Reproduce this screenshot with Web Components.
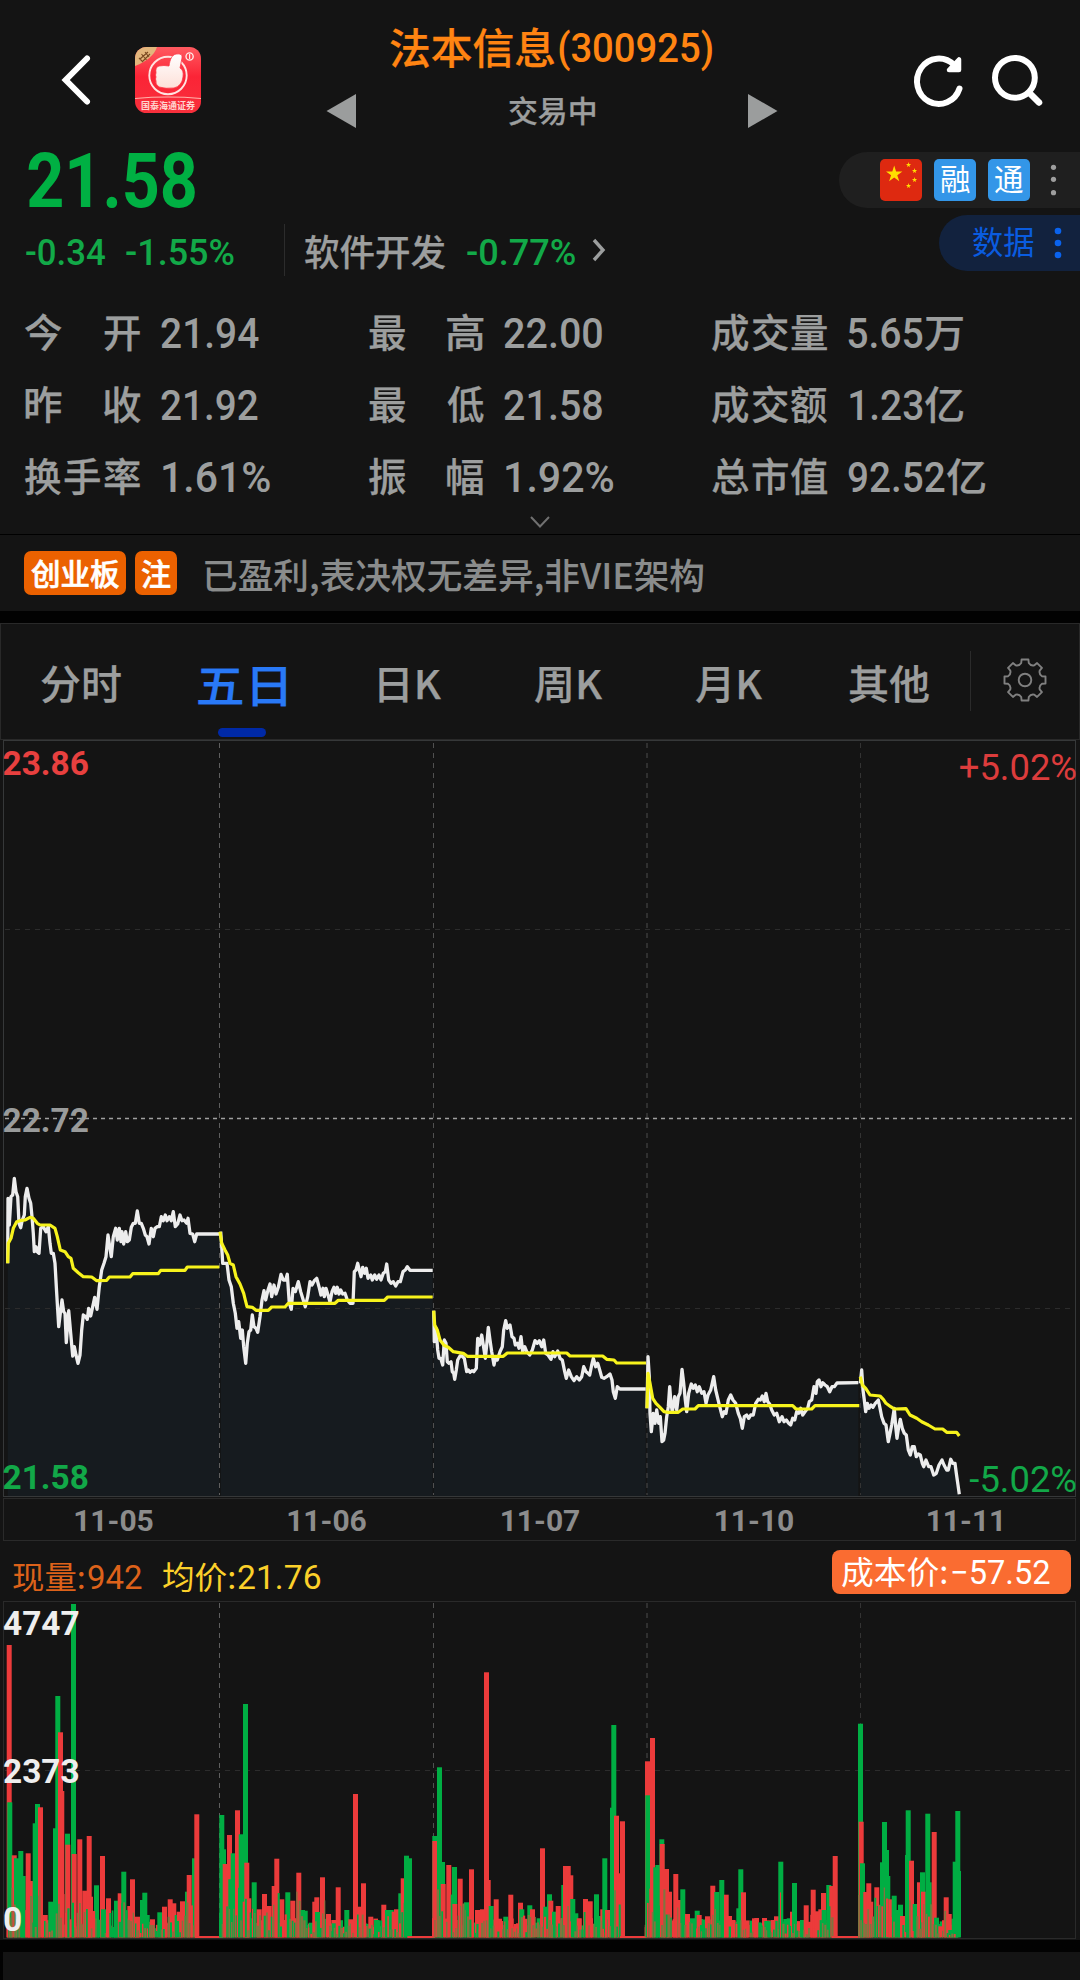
<!DOCTYPE html>
<html lang="zh-CN">
<head>
<meta charset="utf-8">
<title>法本信息(300925)</title>
<style>
  html, body {
    margin: 0;
    background: #000;
  }
  body {
    width: 1080px;
    height: 1980px;
    overflow: hidden;
    color: #9c9e9e;
    font-family: Roboto, "Noto Sans CJK SC", sans-serif;
  }
</style>
</head>
<body>
<stock-page></stock-page>

<template id="page_tpl">
  <style>
    :host {
      display: flex;
      flex-direction: column;
      width: 1080px;
      height: 1980px;
      background: #141414;
    }
    .band { height: 12px; background: #020202; flex: none; }
    .rest { flex: 1; margin-left: 3px; background: #141414; }
    .tail { flex: 1; display: flex; background: #020202; }
  </style>
  <stock-header></stock-header>
  <quote-summary></quote-summary>
  <quote-stats></quote-stats>
  <stock-notice></stock-notice>
  <div class="band"></div>
  <period-tabs></period-tabs>
  <price-chart></price-chart>
  <volume-info></volume-info>
  <volume-chart></volume-chart>
  <div class="band"></div>
  <div class="tail"><div class="rest"></div></div>
</template>

<template id="header_tpl">
  <style>
    :host {
      display: grid;
      grid-template-columns: 326px 452px 1fr;
      height: 140px;
      flex: none;
    }
    .left { display: flex; align-items: flex-start; padding: 47px 0 0 60px; gap: 40px; }
    .mid { padding-top: 22px; }
    .title { display: flex; align-items: center; height: 52px; padding-left: 64px; color: #ff8412; gap: 5px; }
    .title .name { font-size: 42px; }
    .title .code { font-size: 41px; }
    .sub { display: flex; align-items: center; justify-content: space-between; height: 40px; margin-top: 17px; }
    .sub fit-text { font-size: 29.5px; margin-top: .15em; }
    .right { padding: 50px 0 0 130px; }
    svg { display: block; }
  </style>
  <div class="left">
    <svg width="35" height="66" viewBox="60 47 35 66"><path d="M87 58.500L65.700 80l21.300 21.500" fill="none" stroke="#fff" stroke-width="6" stroke-linecap="round"/></svg>
    <svg width="66" height="66" viewBox="0 0 66 66">
      <defs>
        <clipPath id="c"><rect width="66" height="66" rx="11.500"/></clipPath>
        <linearGradient id="g" x1="0" y1="0" x2="0" y2="1"><stop offset="0" stop-color="#ff5a60"/><stop offset=".45" stop-color="#fb2436"/><stop offset="1" stop-color="#f8303c"/></linearGradient>
        <linearGradient id="h" x1="0" y1="0" x2="0" y2="1"><stop offset="0" stop-color="#fff"/><stop offset="1" stop-color="#fde0d8"/></linearGradient>
      </defs>
      <g clip-path="url(#c)">
        <rect width="66" height="66" fill="url(#g)"/>
        <path d="M0 0H22Q18 12 0 19z" fill="#e3b67c"/>
        <path d="M4 11l4 4M6.500 7l5 6M10 5l4 5M5 12l8-7M8 14l7-7" stroke="#7a4a22" stroke-width="1.100"/>
        <circle cx="33" cy="28.500" r="18.700" fill="none" stroke="#ffe3e0" stroke-width="1.900"/>
        <path d="M34 19c1-7 3-11 7-12q7-1 6 4l-2 10q4 2 3 9-1 9-9 11-8 1-15-1-4-3-3-6-1-2 0-4-1-2 0-4-1-6 3-7 5-1 10 0z" fill="url(#h)" stroke="#fb3644" stroke-width=".8"/>
        <circle cx="54.600" cy="9.500" r="3.600" fill="none" stroke="#ffe9e6" stroke-width="1.400"/><path d="M54.600 7v5" stroke="#ffe9e6" stroke-width="1.200"/>
        <path d="M0 51.500Q33 48.500 66 51.500" fill="none" stroke="#ffb4ac" stroke-width="1.200"/>
        <text x="33" y="62" text-anchor="middle" font-size="9" font-weight="700" fill="#ffd5d0" font-family="Noto Sans CJK SC" textLength="54">国泰海通证券</text>
      </g>
    </svg>
  </div>
  <div class="mid">
    <div class="title">
      <fit-text class="name" cjk w="164">法本信息</fit-text>
      <fit-text class="code" w="153">(300925)</fit-text>
    </div>
    <div class="sub">
      <svg width="30" height="34"><path d="M30 0V34L.500 17z" fill="#9b9d9d"/></svg>
      <fit-text cjk w="86">交易中</fit-text>
      <svg width="30" height="34"><path d="M0 0V34L29.500 17z" fill="#9b9d9d"/></svg>
    </div>
  </div>
  <div class="right">
    <svg width="145" height="62" viewBox="908 50 145 62" fill="none" stroke="#fff" stroke-width="6" stroke-linecap="round">
      <path d="M959.500 88.500A21.800 22.700 0 1 1 954 65"/>
      <path d="M959 59.500v10.500h-10z" fill="#fff" stroke-width="4.500" stroke-linejoin="round"/>
      <circle cx="1014.900" cy="77.800" r="19.900"/>
      <path d="M1029.500 93l9.500 9.500" stroke-width="6.500"/>
    </svg>
  </div>
</template>

<template id="summary_tpl">
  <style>
    :host { display: flex; justify-content: space-between; height: 157px; flex: none; }
    .price { display: flex; align-items: center; height: 80px; padding-left: 27.5px; font-size: 76.4px; color: #00b043; }
    .price fit-text { font-weight: 700; }
    .change { display: flex; align-items: center; height: 64px; padding-left: 26px; font-size: 36.6px; color: #12a948; }
    .change fit-text { margin-top: .07em; }
    .change .pct { margin-left: 21px; }
    .line { width: 1px; height: 52px; margin: -4px 20px 0 50px; background: #2c2c2c; }
    .change .sector { color: #9c9e9e; font-size: 36px; margin-top: .11em; }
    .sector + fit-text { margin-left: 22px; }
    .change svg { margin-left: 15px; margin-top: -4px; }
    .right { display: flex; flex-direction: column; align-items: flex-end; gap: 7px; padding-top: 12px; }
    .pill { display: flex; align-items: center; height: 56px; box-sizing: border-box; border-radius: 29px 0 0 29px; }
    .badges { width: 241px; padding-left: 41px; gap: 12px; background: #1f1f1f; }
    .tag { display: flex; align-items: center; justify-content: center; width: 42px; height: 42px; border-radius: 5px; background: #3396e8; color: #fff; font-size: 30px; }
    .tag fit-text { font-weight: 400; margin-top: 0; }
    .data { width: 141px; padding-left: 34px; background: #12223e; color: #0a5ce0; font-size: 31.5px; }
    .data fit-text { font-weight: 400; }
    svg { display: block; flex: none; }
  </style>
  <div>
    <div class="price"><fit-text w="167.5">21.58</fit-text></div>
    <div class="change">
      <fit-text w="79">-0.34</fit-text>
      <fit-text class="pct" w="108">-1.55%</fit-text>
      <div class="line"></div>
      <fit-text class="sector" cjk w="140">软件开发</fit-text>
      <fit-text w="108.5">-0.77%</fit-text>
      <svg width="16" height="24"><path d="M3 2l9 10-9 10" fill="none" stroke="#9c9e9e" stroke-width="3.400"/></svg>
    </div>
  </div>
  <div class="right">
    <div class="pill badges">
      <svg width="42" height="42">
        <rect width="42" height="42" rx="5" fill="#de2910"/>
        <g fill="#ffde00">
          <path id="s" d="M14.200 6.500l1.900 6h6.300l-5.100 3.700 2 6-5.100-3.700-5.100 3.700 2-6-5.100-3.700h6.300z"/>
          <use href="#s" transform="translate(24 1) scale(.32)"/>
          <use href="#s" transform="translate(30 7) scale(.32)"/>
          <use href="#s" transform="translate(30 16) scale(.32)"/>
          <use href="#s" transform="translate(24 22) scale(.32)"/>
        </g>
      </svg>
      <div class="tag"><fit-text cjk w="28.5">融</fit-text></div>
      <div class="tag"><fit-text cjk w="28.5">通</fit-text></div>
      <svg width="22" height="56" fill="#9e9e9e"><circle cx="11.500" cy="15.300" r="2.600"/><circle cx="11.500" cy="27.300" r="2.600"/><circle cx="11.500" cy="40.700" r="2.600"/></svg>
    </div>
    <div class="pill data">
      <fit-text cjk w="61">数据</fit-text>
      <svg width="40" height="56" fill="#0a63ee"><circle cx="24" cy="16" r="3.300"/><circle cx="24" cy="28" r="3.300"/><circle cx="24" cy="40" r="3.300"/></svg>
    </div>
  </div>
</template>

<template id="stats_tpl">
  <style>
    :host { display: block; height: 237px; flex: none; border-bottom: 1px solid #000; }
    .grid { display: grid; grid-template: repeat(3, 72px) / repeat(3, 343.7px); padding-left: 25px; }
    .cell { display: flex; align-items: center; font-size: 42px; }
    .label { display: flex; justify-content: space-between; width: 115px; margin-right: 20.5px; font-size: 39px; }
    .unit { font-size: 39px; margin-left: 2.5px; }
    .first1 { margin-left: 2px; }
    svg { display: block; margin: 2px auto 0; }
  </style>
  <div class="grid"></div>
  <svg width="22" height="14"><path d="M2 2l9 9.500 9-9.500" fill="none" stroke="#707070" stroke-width="2"/></svg>
</template>

<template id="notice_tpl">
  <style>
    :host { display: flex; align-items: center; height: 76px; padding-left: 24px; flex: none; }
    .tag { display: flex; align-items: center; justify-content: center; height: 44px; width: 42px; border-radius: 7px; background: #eb6100; color: #fff; font-size: 29.5px; margin-right: 9px; padding-top: 3px; box-sizing: border-box; }
    .wide { width: 102px; }
    .tag fit-text { -webkit-text-stroke-width: .6px; }
    .msg { margin-left: 18.5px; margin-top: .04em; font-size: 35.5px; color: #8a8c8c; font-family: "Noto Sans CJK SC"; -webkit-text-stroke-width: .1px; }
  </style>
  <div class="tag wide"><fit-text cjk w="88">创业板</fit-text></div>
  <div class="tag"><fit-text cjk w="28.5">注</fit-text></div>
  <fit-text class="msg" cjk w="498.5">已盈利,表决权无差异,非VIE架构</fit-text>
</template>

<template id="tabs_tpl">
  <style>
    :host { display: flex; box-sizing: border-box; height: 117px; border: 1px solid #292929; flex: none; font-family: "Noto Sans CJK SC"; font-size: 40px; }
    .tabs { display: flex; justify-content: space-between; box-sizing: border-box; width: 969px; padding: 35px 41px 0 40px; }
    .tab { display: flex; flex-direction: column; align-items: center; }
    .first { margin-right: -17px; }
    .last { margin-left: -7px; }
    .on { color: #2979f7; font-size: 45px; margin-top: -1px; }
    .bar { width: 48px; height: 9px; margin-top: 21.5px; border-radius: 5px; background: #0029a6; }
    .set { flex: 1; display: flex; align-items: center; border-left: 1px solid #2b2b2b; height: 60px; margin-top: 27px; }
    svg { display: block; margin: -2px 0 0 31px; }
  </style>
  <div class="tabs">
    <div class="tab first"><fit-text cjk w="80">分时</fit-text></div>
    <div class="tab on"><fit-text cjk w="88">五日</fit-text><div class="bar"></div></div>
    <div class="tab"><fit-text cjk w="62.5">日K</fit-text></div>
    <div class="tab"><fit-text cjk w="67.5">周K</fit-text></div>
    <div class="tab"><fit-text cjk w="66.5">月K</fit-text></div>
    <div class="tab last"><fit-text cjk w="80">其他</fit-text></div>
  </div>
  <div class="set"><svg width="46" height="46" viewBox="-23 -23 46 46" fill="none" stroke="#808080" stroke-width="1.900" stroke-linejoin="round"><circle r="6.300"/><path class="gear"/></svg></div>
</template>

<template id="info_tpl">
  <style>
    :host { display: flex; height: 60px; flex: none; font-size: 33px; }
    fit-text { font-weight: 400; margin-top: 0; }
    .now, .avg { display: flex; align-items: center; height: 73px; }
    .now { margin-left: 13px; color: #dd621a; gap: 4px; }
    .avg { margin-left: 21px; color: #fbd02a; gap: 3px; }
    .k { margin-top: -.1em; font-size: 31.5px; font-family: "Noto Sans CJK SC"; }
    .cost { display: flex; align-items: center; box-sizing: border-box; width: 239px; height: 44px; margin: 9px 9px 0 auto; padding-left: 10px; gap: 5px; border-radius: 8px; background: #fa6c31; color: #fff; }
    .cost .k { font-size: 32px; }
  </style>
  <div class="now"><fit-text class="k" cjk w="71">现量:</fit-text><fit-text w="54">942</fit-text></div>
  <div class="avg"><fit-text class="k" cjk w="71.5">均价:</fit-text><fit-text w="82">21.76</fit-text></div>
  <div class="cost"><fit-text class="k" cjk w="104.5">成本价:</fit-text><fit-text w="98">−57.52</fit-text></div>
</template>

<script>
const tpl = id => document.querySelector('#' + id).content.cloneNode(true);

// Condensed text: its ink is stretched or squeezed to the width given in "w".
const ruler = document.createElement('canvas').getContext('2d');
class FitText extends HTMLElement {
  connectedCallback() {
    if (this.shadowRoot) return;
    this.attachShadow({mode: 'open'}).innerHTML = `
      <style>
        :host { display: block; flex: none; margin-top: .04em; white-space: nowrap; line-height: 1; font-weight: 500; }
        :host([cjk]) { margin-top: .076em; }
        span { display: inline-block; transform-origin: 0 50%; }
      </style><span><slot></slot></span>`;
    const cs = getComputedStyle(this);
    // the CJK family has no medium weight, so thicken the regular one a little
    if (this.hasAttribute('cjk') && cs.fontWeight === '500' && parseFloat(cs.webkitTextStrokeWidth) === 0) {
      this.style.webkitTextStrokeWidth = '.25px';
    }
    ruler.font = `${cs.fontWeight} ${cs.fontSize} ${cs.fontFamily}`;
    const m = ruler.measureText(this.textContent);
    const w = +this.getAttribute('w');
    const k = w / (m.actualBoundingBoxLeft + m.actualBoundingBoxRight);
    this.style.width = w + 'px';
    this.shadowRoot.querySelector('span').style.transform =
      `translateX(${m.actualBoundingBoxLeft * k}px) scaleX(${k})`;
  }
}

function define(name, id, setup) {
  customElements.define(name, class extends HTMLElement {
    constructor() {
      super();
      this.attachShadow({mode: 'open'}).appendChild(tpl(id));
      if (setup) setup(this.shadowRoot);
    }
  });
}

const STATS = [
  ['今开', '21.94', 97.5], ['最高', '22.00', 98], ['成交量', '5.65', 75, '万'],
  ['昨收', '21.92', 97], ['最低', '21.58', 98], ['成交额', '1.23', 72.5, '亿'],
  ['换手率', '1.61%', 107.5], ['振幅', '1.92%', 108], ['总市值', '92.52', 97, '亿'],
];

function fillStats(root) {
  root.querySelector('.grid').innerHTML = STATS.map(([label, val, w, unit]) => `
    <div class="cell">
      <div class="label">${[...label].map(c => `<fit-text cjk w="36.5">${c}</fit-text>`).join('')}</div>
      <fit-text class="${val[0] === '1' ? 'first1' : ''}" w="${w}">${val}</fit-text>
      ${unit ? `<fit-text class="unit" cjk w="38">${unit}</fit-text>` : ''}
    </div>`).join('');
}

function drawGear(root) {
  const p = (deg, r) => {
    const a = deg * Math.PI / 180;
    return (r * Math.sin(a)).toFixed(2) + ' ' + (-r * Math.cos(a)).toFixed(2);
  };
  let d = '';
  for (let k = 0; k < 360; k += 45) {
    d += `${k ? 'L' : 'M'}${p(k - 9.5, 20.8)}L${p(k + 9.5, 20.8)}L${p(k + 12.5, 17.4)}Q${p(k + 22.5, 15)} ${p(k + 32.5, 17.4)}`;
  }
  root.querySelector('.gear').setAttribute('d', d + 'z');
}

// Each day: origin of its grid (in page pixels), then points in thirds of a pixel.
const DAYS = [
  { x: 0, y: 1100,
    price: '23,490 24,295 28,375 33,290 38,285 43,235 48,275 53,290 57,370 62,383 67,360 73,345 76,290 81,265 87,295 92,310 96,350 100,400 103,455 108,440 112,455 117,460 122,385 130,380 138,395 145,380 150,430 154,460 160,460 165,490 170,580 176,680 181,640 186,600 191,635 195,640 199,728 206,632 212,700 218,768 223,740 228,765 234,790 240,765 245,690 250,645 257,650 262,658 266,625 272,648 278,620 284,592 291,628 298,560 305,510 312,490 318,470 324,405 329,440 334,470 340,410 347,385 352,420 358,385 363,425 366,395 371,432 377,395 382,425 388,420 394,382 400,370 406,370 412,333 418,370 424,370 430,385 436,405 441,410 447,432 454,385 460,410 465,385 472,380 478,380 484,350 490,362 496,345 501,362 508,350 514,362 520,335 526,380 533,372 540,345 546,362 552,360 560,370 564,355 570,400 578,402 584,425 590,402 658,402',
    avg: '23,490 25,430 33,415 40,385 50,365 60,362 75,360 90,352 100,355 112,370 120,375 150,375 165,385 172,410 181,450 195,455 205,470 213,475 220,505 235,518 250,530 275,531 290,542 320,541 328,531 390,531 398,521 475,521 482,511 555,511 562,501 658,501' },
  { x: 0, y: 1100,
    price: '662,395 665,440 668,490 676,490 681,490 687,540 694,560 700,610 706,640 711,685 716,665 722,715 727,690 731,740 737,790 742,730 747,695 752,690 757,645 762,680 768,685 773,697 780,650 786,600 792,572 797,600 804,570 810,552 815,590 822,555 828,582 835,562 843,523 850,540 857,540 862,523 868,610 874,628 879,565 886,575 895,545 902,575 908,595 916,620 923,590 930,545 936,555 943,542 950,535 957,560 963,585 969,565 973,590 978,565 984,585 990,606 996,575 1002,562 1007,580 1012,562 1017,582 1022,570 1028,582 1035,580 1042,600 1050,610 1059,610 1063,515 1068,510 1073,490 1078,510 1083,530 1088,502 1094,520 1099,505 1104,535 1112,525 1117,540 1124,525 1130,538 1137,525 1143,540 1150,520 1156,515 1160,492 1166,540 1173,550 1180,545 1187,558 1194,545 1201,545 1209,515 1216,510 1222,500 1230,511 1298,511',
    avg: '660,395 665,430 675,450 683,465 690,490 700,495 708,530 720,552 731,580 736,600 741,620 757,622 768,631 805,631 815,621 855,621 865,610 1005,610 1015,601 1153,601 1163,591 1298,591' },
  { x: 420, y: 1240,
    price: '41,212 43,305 48,265 53,330 57,355 62,355 68,375 73,300 78,310 82,365 87,370 93,365 97,395 101,400 104,418 109,390 113,360 120,348 126,348 133,355 140,395 145,390 150,397 156,392 161,395 169,385 173,295 179,315 185,285 190,315 196,355 200,315 205,262 210,300 215,335 222,375 227,350 232,360 240,335 247,320 251,270 257,242 262,265 270,255 276,290 282,295 286,315 292,310 297,325 303,290 308,335 314,320 320,335 329,345 337,330 345,302 352,310 358,302 365,320 371,300 377,340 384,345 393,358 399,335 404,350 413,333 420,355 427,360 434,395 439,415 446,390 454,410 462,422 470,410 478,420 485,410 491,380 498,395 504,400 509,405 515,375 520,355 527,380 533,370 539,390 545,412 552,415 560,410 570,402 576,420 580,455 586,475 592,440 600,447 677,447',
    avg: '41,212 44,255 52,270 60,300 72,316 85,322 100,335 130,340 142,349 250,349 262,339 440,339 450,348 548,348 560,358 582,360 590,369 678,369' },
  { x: 420, y: 1240,
    price: '681,505 684,350 688,410 690,520 694,575 700,520 705,550 710,510 716,550 721,530 726,605 731,600 735,580 740,530 745,500 749,440 753,490 757,515 764,470 770,510 775,470 780,460 786,388 791,430 796,480 800,515 806,460 814,432 820,445 826,435 832,455 838,440 845,460 852,455 858,490 864,465 872,450 881,410 887,450 893,475 899,500 907,530 913,515 918,520 925,480 932,465 939,480 947,490 955,520 961,535 967,565 973,530 980,525 986,535 992,525 1000,525 1007,490 1015,478 1021,480 1027,468 1033,485 1038,460 1043,485 1049,492 1055,510 1063,525 1070,520 1078,545 1086,530 1092,545 1099,540 1106,550 1112,555 1118,535 1124,540 1130,515 1136,520 1142,505 1148,525 1155,515 1163,505 1168,485 1175,480 1182,440 1188,460 1192,425 1197,420 1203,440 1208,428 1215,435 1222,440 1229,455 1236,440 1243,440 1251,429 1315,428',
    avg: '681,505 684,400 690,430 698,475 708,490 720,502 732,515 745,517 775,517 788,507 825,507 835,497 1118,497 1128,507 1175,507 1185,497 1318,497' },
  { x: 700, y: 1300,
    price: '481,250 485,210 489,270 493,300 497,335 502,310 507,325 513,315 519,322 526,310 535,300 539,320 545,350 552,370 558,375 565,425 570,400 575,375 583,325 587,380 591,415 596,380 601,358 607,385 613,400 619,405 625,450 631,465 637,440 643,440 649,470 655,462 661,465 667,490 671,500 678,480 686,500 693,500 701,525 709,520 717,495 726,480 732,495 740,510 745,510 752,478 758,490 765,490 769,520 774,555 778,583',
    avg: '481,230 487,255 497,265 510,285 540,288 550,298 558,310 572,320 583,327 618,326 630,345 650,355 665,365 685,375 705,387 728,387 740,397 770,397 778,408' },
];

const SPLITS = [[219.5, '#5e5e5e'], [433.5, '#505050'], [647, '#4c4c4c'], [860.5, '#333']];
const splitLines = (top, bottom) => SPLITS.map(([x, c]) =>
  `<path d="M${x} ${top}V${bottom}" stroke="${c}" stroke-dasharray="5 5"/>`).join('');

class PriceChart extends HTMLElement {
  constructor() {
    super();
    const toPage = (day, s) => s.split(' ').map(p => {
      const [x, y] = p.split(',');
      return [(day.x + x / 3).toFixed(1), (day.y + y / 3).toFixed(1)];
    });
    let areas = '', lines = '', avgs = '';
    for (const day of DAYS) {
      const pts = toPage(day, day.price);
      const d = pts.map(p => p.join(' ')).join('L');
      areas += `<path d="M${pts[0][0]} 1496L${d}V1496z"/>`;
      lines += `<path d="M${d}"/>`;
      avgs += `<path d="M${toPage(day, day.avg).map(p => p.join(' ')).join('L')}"/>`;
    }
    const dates = [['11-05', 113.5], ['11-06', 326.5], ['11-07', 540], ['11-10', 754], ['11-11', 966]];
    this.attachShadow({mode: 'open'}).innerHTML = `
      <style>
        :host { display: block; height: 801px; flex: none; }
        svg { display: block; font-family: Roboto; }
        .b { font-size: 33.4px; font-weight: 700; }
        .p { font-size: 36.4px; text-anchor: end; }
        .d { font-size: 30px; font-weight: 700; fill: #8c8c8c; text-anchor: middle; }
      </style>
      <svg width="1080" height="801" viewBox="0 740 1080 801" fill="none">
        <g fill="#161b1f">${areas}</g>
        <rect x="3.5" y="740.5" width="1072" height="756" stroke="#363839"/>
        <rect x="3.5" y="1498.5" width="1072" height="42" stroke="#2a2a2a"/>
        ${splitLines(743, 1495)}
        <path d="M5 929.5H1072M5 1308.5H1072" stroke="#2c2c2c" stroke-dasharray="5 5"/>
        <path d="M5 1118.5H1072" stroke="#a0a0a0" stroke-width="1.4" stroke-dasharray="4 4"/>
        <g stroke="#ededed" stroke-width="3.3" stroke-linejoin="round">${lines}</g>
        <g stroke="#f7f31c" stroke-width="3.2" stroke-linejoin="round">${avgs}</g>
        <text class="b" x="2.5" y="774.5" fill="#e8403f">23.86</text>
        <text class="b" x="2.5" y="1132" fill="#999b9b">22.72</text>
        <text class="b" x="2.5" y="1489" fill="#12a848">21.58</text>
        <text class="p" x="1077" y="780" fill="#dc3c3c">+5.02%</text>
        <text class="p" x="1077" y="1492" fill="#12a848">-5.02%</text>
        ${dates.map(([t, x]) => `<text class="d" x="${x}" y="1531">${t}</text>`).join('')}
      </svg>`;
  }
}

// Bars per day as colour, left edge and top; "rest" is the flat stretch after the close.
const VOLUMES = [
  { x: 0, from: 20, to: 585, rest: 668,
    bars: 'r20,255 g22,727 r35,886 g42,895 g55,873 g62,948 r77,880 r84,963 g98,790 g105,732 r114,742 r128,1065 g145,1025 g159,805 g166,408 r174,517 r178,693 g195,821 r196,854 g213,132 r215,882 r232,838 r247,992 r260,828 r264,1010 g282,976 r300,888 g303,1048 r318,1015 g342,1022 r353,1000 g364,935 r382,1038 r390,958 r405,1070 g420,1020 g427,998 g434,1065 r450,1078 g472,1057 r486,1040 r503,1018 r514,1030 r530,1055 r540,1024 g555,995 r560,945 g576,895 r583,763' },
  { x: 0, from: 658, to: 1222, rest: 1305,
    bars: 'g658,765 g663,868 r668,912 r681,825 g685,958 g692,880 r705,751 g716,823 g729,432 r733,908 r739,1015 g755,967 r770,1048 r786,1002 r800,1038 r815,978 r823,896 r838,1018 g856,997 r871,1022 r889,938 g900,1050 g908,1052 g926,1088 r937,1025 r943,1012 g945,1056 r960,952 r978,1062 g995,1090 r1007,982 g1033,1050 r1045,1078 r1059,702 r1070,1040 r1083,970 r1105,1070 g1122,1080 r1144,1034 g1155,1050 g1166,1050 r1175,1055 r1182,1048 g1195,1000 r1202,955 g1212,887 g1221,895' },
  { x: 420, from: 36, to: 600, rest: 680,
    bars: 'g37,828 r37,843 g51,622 g60,906 r62,972 r79,915 g96,921 r97,1032 r113,956 g132,1027 r147,928 r165,1050 r180,1048 r192,337 r197,960 g206,1038 r221,1018 r235,1083 g250,1070 r265,1004 r281,1092 r294,1028 g298,1048 g322,1036 r330,1048 g350,1075 r360,865 g370,1040 g381,1003 r385,1022 g396,1055 r407,1038 g424,975 r429,918 r437,918 r445,946 g451,1017 g460,1060 r470,1075 r489,1017 r503,1024 g522,1003 g534,1068 r541,1048 g547,895 r555,1050 g570,743 g574,495 r582,767 r590,940 r600,784' },
  { x: 420, from: 674, to: 1235, rest: 1320,
    bars: 'r675,604 g676,706 r690,534 g700,922 g706,915 g718,838 r719,852 r732,927 r741,995 r760,942 r768,1020 g781,988 r795,1062 g810,1075 g824,1052 r830,1065 g840,1095 r855,1069 r871,977 g883,996 g898,960 r911,1004 r921,1068 r930,1080 g949,1045 g955,928 r963,997 r970,1097 r1000,1084 r1026,1074 g1033,1083 r1062,1069 g1075,905 g1090,1077 g1100,1075 r1110,1055 g1116,969 r1130,1092 g1140,1080 r1151,1036 r1172,989 r1184,1054 r1195,1048 r1203,999 g1205,1050 g1219,975 r1228,978 r1238,888' },
  { x: 640, from: 654, to: 945,
    bars: 'g654,491 r656,785 g660,910 r670,996 r679,970 r685,1025 r703,982 g720,907 g726,786 g732,870 g736,948 r745,1018 g755,1007 g765,1050 g774,1034 r780,1068 g795,885 g797,751 r807,902 g818,1032 r831,967 g840,937 r843,995 g856,761 g860,967 r875,816 g882,1073 r895,1099 r911,1012 r920,1062 g925,1110 g938,905 g946,753 g948,933' },
];

class VolumeChart extends HTMLElement {
  constructor() {
    super();
    const colors = { r: '#ec3b3b', g: '#00ae43', m: '#80753f' };
    let seed = 17;
    const rand = () => (seed = (seed * 16807) % 2147483647) / 2147483647;
    let out = '';
    const bar = (ox, c, x, top, w = 15) => {
      out += `<rect x="${(ox + x / 3).toFixed(1)}" y="${(1560 + top / 3).toFixed(1)}" width="${(w / 3).toFixed(1)}" height="${((1132 - top) / 3).toFixed(1)}" fill="${colors[c]}"/>`;
    };
    for (const v of VOLUMES) {
      const bars = v.bars.split(' ').map(b => {
        const [x, y] = b.slice(1).split(',').map(Number);
        return { c: b[0], x, y };
      });
      // low trades behind the peaks
      for (let x = v.from; x < v.to; x += 7) bar(v.x, rand() < .6 ? 'r' : 'g', x, 1108 - rand() * 34, 14);
      for (const b of bars) bar(v.x, b.c, b.x, b.y);
      // overlapping minutes in front
      for (let x = v.from; x < v.to; x += 7) {
        const near = bars.filter(b => b.x <= x + 3 && b.x + 18 > x);
        const top = near.length ? Math.max(...near.map(b => b.y)) : 1095;
        const room = Math.min(1132 - top, 190);
        const pick = rand();
        bar(v.x, pick < .5 ? 'm' : pick < .75 ? 'r' : 'g', x, 1132 - room * (.15 + rand() * .65), 3 + rand() * 4);
      }
      if (v.rest) out += `<path d="M${v.x + v.to / 3} 1937H${v.x + v.rest / 3}" stroke="#ec3b3b" stroke-width="2"/>`;
    }
    this.attachShadow({mode: 'open'}).innerHTML = `
      <style>
        :host { display: block; height: 339px; flex: none; }
        svg { display: block; font: 700 33.4px Roboto; }
      </style>
      <svg width="1080" height="339" viewBox="0 1601 1080 339">
        <rect x="3.5" y="1601.5" width="1072" height="337" fill="none" stroke="#2a2a2a"/>
        ${splitLines(1603, 1937)}
        <path d="M5 1770.5H1072" stroke="#2c2c2c" stroke-dasharray="5 5"/>
        <g>${out}</g>
        <g fill="#eee">
          <text x="3" y="1635">4747</text>
          <text x="3" y="1783">2373</text>
          <text x="3" y="1931">0</text>
        </g>
      </svg>`;
  }
}

customElements.define('fit-text', FitText);
define('stock-header', 'header_tpl');
define('quote-summary', 'summary_tpl');
define('quote-stats', 'stats_tpl', fillStats);
define('stock-notice', 'notice_tpl');
define('period-tabs', 'tabs_tpl', drawGear);
customElements.define('price-chart', PriceChart);
define('volume-info', 'info_tpl');
customElements.define('volume-chart', VolumeChart);
define('stock-page', 'page_tpl');
</script>
</body>
</html>
